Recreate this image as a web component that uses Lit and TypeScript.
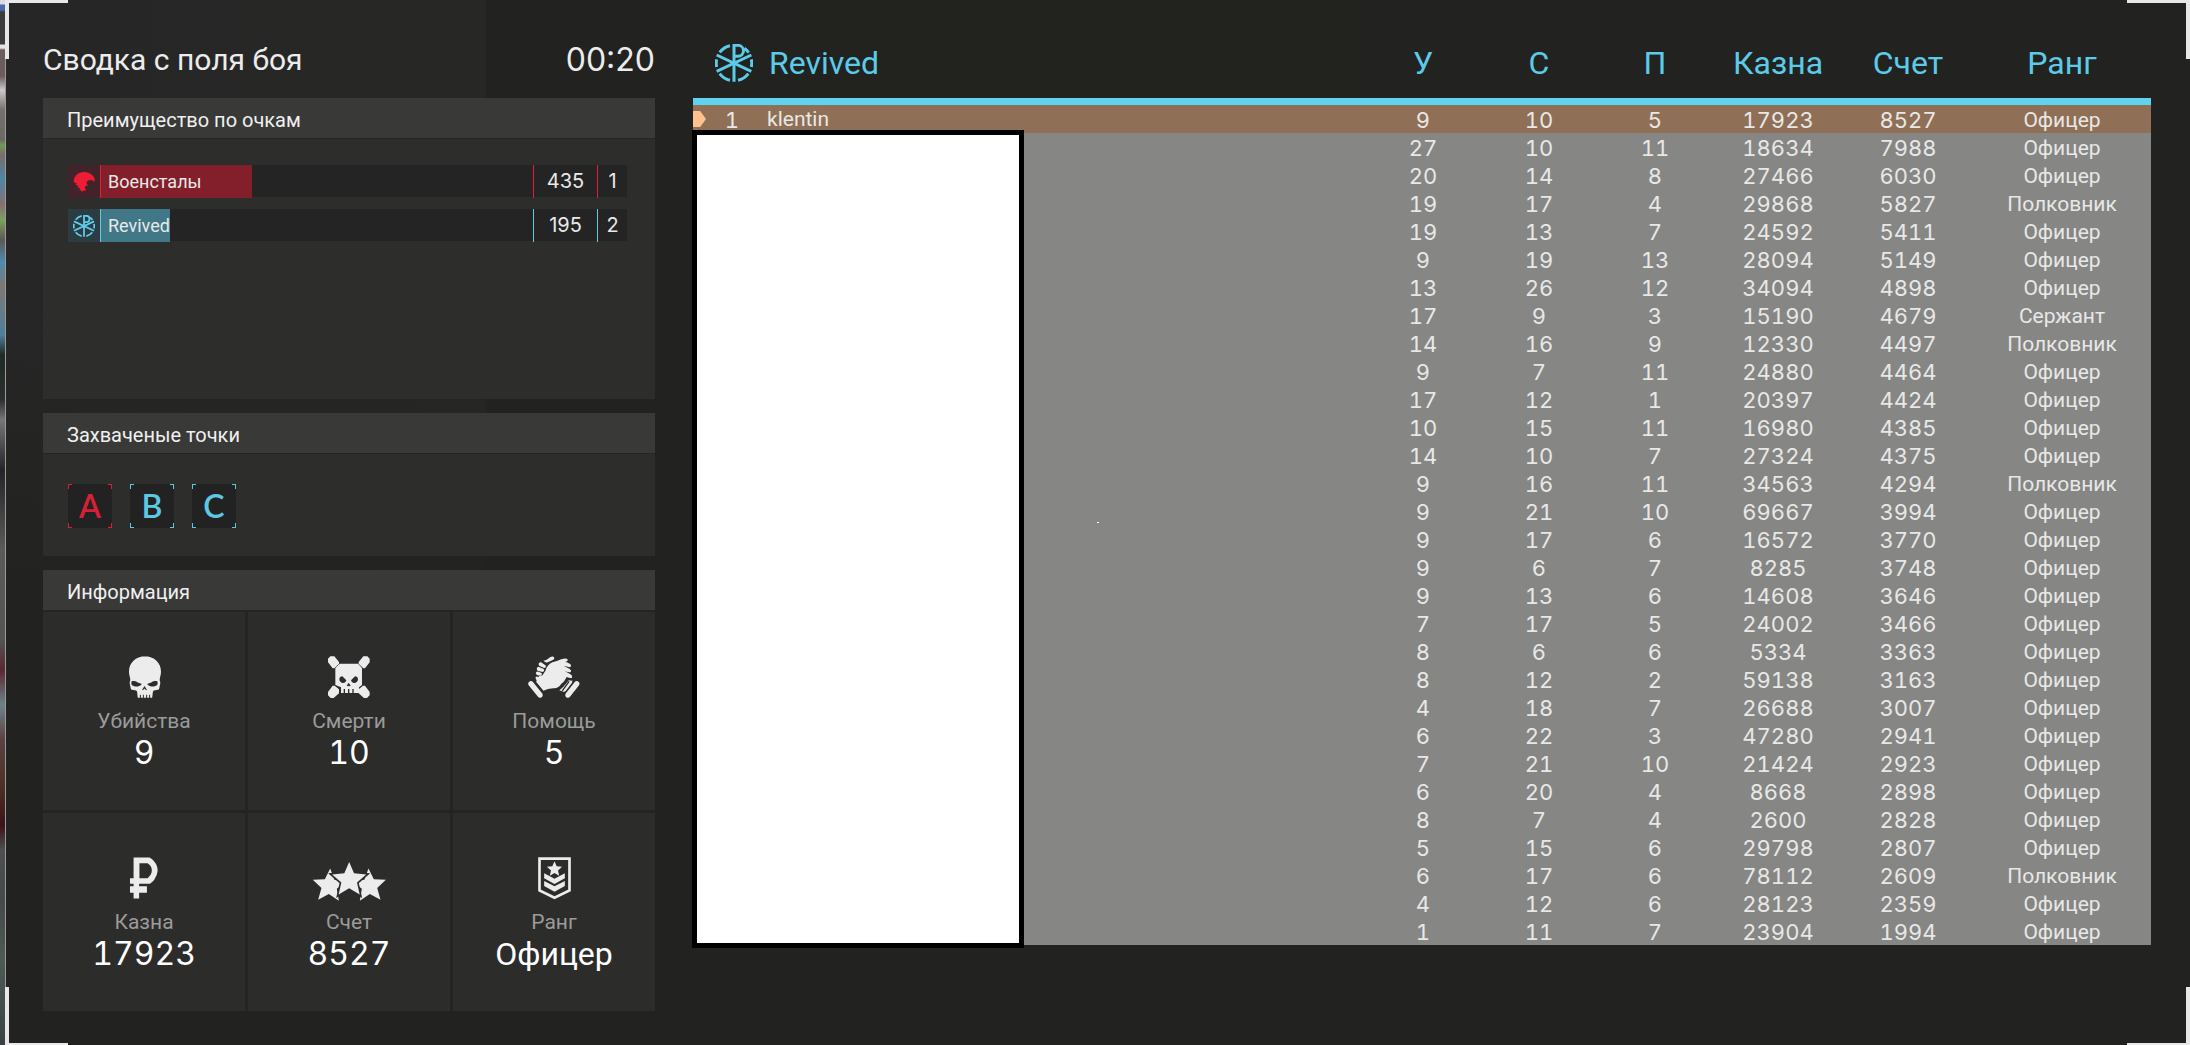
import { LitElement, html, css, svg, nothing } from "lit";
import { customElement, property } from "lit/decorators.js";
import { classMap } from "lit/directives/class-map.js";
import { styleMap } from "lit/directives/style-map.js";

type Row = [number, number, number, number, number, string];

const O = "Офицер";
const P = "Полковник";

const ROWS: Row[] = [
  [9, 10, 5, 17923, 8527, O],
  [27, 10, 11, 18634, 7988, O],
  [20, 14, 8, 27466, 6030, O],
  [19, 17, 4, 29868, 5827, P],
  [19, 13, 7, 24592, 5411, O],
  [9, 19, 13, 28094, 5149, O],
  [13, 26, 12, 34094, 4898, O],
  [17, 9, 3, 15190, 4679, "Сержант"],
  [14, 16, 9, 12330, 4497, P],
  [9, 7, 11, 24880, 4464, O],
  [17, 12, 1, 20397, 4424, O],
  [10, 15, 11, 16980, 4385, O],
  [14, 10, 7, 27324, 4375, O],
  [9, 16, 11, 34563, 4294, P],
  [9, 21, 10, 69667, 3994, O],
  [9, 17, 6, 16572, 3770, O],
  [9, 6, 7, 8285, 3748, O],
  [9, 13, 6, 14608, 3646, O],
  [7, 17, 5, 24002, 3466, O],
  [8, 6, 6, 5334, 3363, O],
  [8, 12, 2, 59138, 3163, O],
  [4, 18, 7, 26688, 3007, O],
  [6, 22, 3, 47280, 2941, O],
  [7, 21, 10, 21424, 2923, O],
  [6, 20, 4, 8668, 2898, O],
  [8, 7, 4, 2600, 2828, O],
  [5, 15, 6, 29798, 2807, O],
  [6, 17, 6, 78112, 2609, P],
  [4, 12, 6, 28123, 2359, O],
  [1, 11, 7, 23904, 1994, O],
];

const emblem = html`<svg class="emblem" viewBox="0 0 114 114" fill="none" stroke="currentColor" stroke-width="9" aria-hidden="true">
  ${svg`
  <path d="M57 113V4h12a15 15 0 0 1 0 33H57"/>
  <path d="M5 33L109 82M5 82L109 33"/>
  <path d="M14 25A53 53 0 0 1 45 5M88 13A53 53 0 0 1 101 26M14 89A53 53 0 0 0 45 109M100 89A53 53 0 0 1 69 109M5 46A53 53 0 0 0 5 69M109 46A53 53 0 0 1 109 69"/>`}
</svg>`;

const eagle = html`<svg class="eagle" viewBox="0 0 66 62" fill="currentColor" aria-hidden="true">
  <path d="M2 29C3 12 16 1 33 1c12 0 23 6 29 14 3 5 4 11 2 17-2-5-6-7-12-7-7 0-11 4-11 8 0 5 4 7 3 11-3-2-6-2-8 1-1 5 3 8 4 12-5-2-8 0-13 3-2-3-4-5-8-6l2-5-8-2 3-5-8-3 3-4C3 33 2 31 2 29Z"/>
</svg>`;

const star = (cx: number, cy: number, r: number, turn: number) => {
  const pts = Array.from({ length: 10 }, (_, i) => {
    const a = (turn + i * 36 - 90) * (Math.PI / 180);
    const k = i % 2 ? r * 0.46 : r;
    return `${(cx + k * Math.cos(a)).toFixed(1)},${(cy + k * Math.sin(a)).toFixed(1)}`;
  });
  return pts.join(" ");
};

const ICONS = {
  kills: html`<svg viewBox="53 33 100 126" width="33" height="42" aria-hidden="true">
    <path class="lit" d="M103 33c30 0 50 20 50 47 0 11-4 17-4 26 3 5 2 12 0 17-1 5-1 11-5 12-5 2-13 0-15 4-2 5-1 13-3 20h-6v-9h-3v9h-6v-9h-3v9h-7v-9h-3v9h-6v-9h-3v9h-6c-2-7-1-15-3-20-2-4-10-2-15-4-4-1-4-7-5-12-2-5-3-12 0-17 0-9-4-15-4-26 0-27 20-47 50-47Z"/>
    <path class="cut" d="M64 109c6-1 11-1 17 3l14 5c-6 7-15 9-23 7-5-1-9-4-9-8ZM142 109c-6-1-11-1-17 3l-14 5c6 7 15 9 23 7 5-1 9-4 9-8ZM103 123l8 13-6-2-2-3-2 3-6 2Z"/>
  </svg>`,
  deaths: html`<svg viewBox="657 33 126 126" width="42" height="42" aria-hidden="true">
    <path class="lit" d="M664 34h12l14 17v5l-14 14h-5l-14-18V41ZM775 34h-12l-14 17v5l14 14h5l14-18V41ZM671 122h6l13 11v12l-16 14h-9l-8-8v-10ZM768 122h-6l-13 11v12l16 14h9l8-8v-10Z"/>
    <path class="lit" d="M692 56h55l12 13v51l-9 7v17h-54v-17l-17-7V69Z"/>
    <path class="cut" d="M691 103c0-5 4-9 9-9l12 12c-1 5-5 8-10 8-6 0-11-5-11-11ZM747 103c0-5-4-9-9-9l-12 12c1 5 5 8 10 8 6 0 11-5 11-11ZM719 113l6 9-4 2-2-2-2 2-4-2ZM704 132h4v13h-4ZM717 132h4v13h-4ZM730 132h4v13h-4Z"/>
  </svg>`,
  assists: html`<svg viewBox="1253 33 158 126" width="52" height="42" aria-hidden="true">
    <path class="lit" d="M1260 108q5-1 8 3l29 36q3 7-3 11-6 3-10-1l-29-36q-5-8 5-13ZM1403 108q-5-1-8 3l-28 36q-3 7 3 11 6 3 10-1l28-36q5-8-5-13Z"/>
    <path class="lit" d="M1327 51q14-3 27-9 13-4 19-1 3 8-9 9 9 1 18 7 4 7-2 9l-19-4 19 10q6 4 3 9-5 2-19-3l18 10q6 3 5 10-4 3-17-2-6 15-15 20-11 17-26 14-16 0-29 8l-22-27q2-20 19-20l9-14q4-18 21-26Z"/>
    <path class="lit" d="M1300 47q9-2 15-7 7-7 14-6 7 4 2 9-9 5-18 8-6 3-13-4ZM1287 53q-4 3 0 9l15 7q7-1 5-8l-13-9q-4-2-7 1ZM1281 67q-4 4 1 10l15 4q7-2 4-9l-13-6q-4-2-7 1ZM1278 81q-3 5 2 9l10 2q8-3 4-8l-9-4q-4-2-7 1ZM1276 96q-1 5 3 9 9 0 9-7l-6-3q-4-1-6 1Z"/>
    <path class="lit" d="M1377 106q6 2 11 1-1 8-3 9l-17 22q-3 4-9 2l-11-4q10-5 29-30Z"/>
    <path class="gap" d="M1378 109l-21 29"/>
  </svg>`,
  cash: html`<svg viewBox="62 42 86 126" width="28" height="42" aria-hidden="true">
    <path class="lit" fill-rule="evenodd" d="M73 42h49q9 5 15 13 10 12 10 28-1 14-11 28-5 6-13 12H90v7h24v20H90v18H73v-18H62v-20h11v-7H62v-17h11ZM91 60v46h25q13-12 13-24 0-14-13-22Z"/>
  </svg>`,
  score: html`<svg viewBox="605 42 226 126" width="75" height="42" aria-hidden="true">
    <polygon class="lit" points="${star(657, 129, 53, 3)}"/>
    <polygon class="lit" points="${star(778, 129, 53, -3)}"/>
    <polygon class="lit ring" points="${star(717, 111, 54, 0)}"/>
  </svg>`,
  rank: html`<svg viewBox="1285 46 98 126" width="33" height="42" aria-hidden="true">
    <path class="line" d="M1289 51h90v95l-45 22-45-22Z"/>
    <polygon class="lit" points="${star(1334, 83, 24, 0)}"/>
    <path class="lit" d="M1303 95l31 16 31-16v15l-31 17-31-17ZM1303 118l31 16 31-16v15l-31 17-31-17Z"/>
  </svg>`,
};

@customElement("team-bar")
export class TeamBar extends LitElement {
  @property() name = "";
  @property() side: "red" | "blue" = "red";
  @property({ type: Number }) points = 0;
  @property({ type: Number }) place = 0;
  @property({ type: Number }) fill = 0;

  static styles = css`
    :host { display: block; }
    .bar {
      display: grid;
      grid-template-columns: 32px minmax(0, 1fr) 64px 30px;
      height: 32px;
      background: #242424;
      color: #e9e9e9;
      font-size: 18px;
      line-height: 33px;
    }
    .red { --edge: #e01f35; --fill: #831f2b; --cell: #43232a; --mark: #ee1c35; }
    .blue { --edge: #62c9e2; --fill: #417888; --cell: #2b3d43; --mark: #5fcfee; }
    .logo { display: grid; place-items: center; background: var(--cell); color: var(--mark); }
    .emblem, .eagle { width: 22px; height: 22px; }
    .track, .num { border-left: 1px solid var(--edge); }
    .track { display: grid; align-items: stretch; }
    .level { background: var(--fill); grid-area: 1 / 1; }
    .name { grid-area: 1 / 1; padding-left: 7px; }
    .num { text-align: center; font-family: Inter, "Liberation Sans", sans-serif; font-size: 20px; }
  `;

  render() {
    return html`
      <div class=${classMap({ bar: true, [this.side]: true })}>
        <span class="logo">${this.side === "red" ? eagle : emblem}</span>
        <span class="track">
          <span class="level" style=${styleMap({ width: `${this.fill}%` })}></span>
          <span class="name">${this.name}</span>
        </span>
        <span class="num">${this.points}</span>
        <span class="num">${this.place}</span>
      </div>
    `;
  }
}

@customElement("stat-tile")
export class StatTile extends LitElement {
  @property() icon: keyof typeof ICONS = "kills";
  @property() label = "";
  @property() value = "";

  static styles = css`
    :host {
      display: flex;
      flex-direction: column;
      align-items: center;
      justify-content: center;
      padding-top: 4px;
      background: #2c2c2b;
    }
    svg { display: block; overflow: visible; }
    .lit { fill: #ececec; }
    .cut { fill: #2c2c2b; }
    .gap { stroke: #2c2c2b; stroke-width: 4; }
    .ring { stroke: #2c2c2b; stroke-width: 10; paint-order: stroke; }
    .line { fill: none; stroke: #ececec; stroke-width: 8; }
    .label { margin-top: 9px; color: #9b9b9a; font-size: 21px; line-height: 28px; }
    .value { color: #fff; font-size: 32px; line-height: 36px; }
    .digits { font-family: Inter, "Liberation Sans", sans-serif; font-variant-numeric: tabular-nums; }
  `;

  render() {
    return html`
      ${ICONS[this.icon]}
      <span class="label">${this.label}</span>
      <span class=${classMap({ value: true, digits: /^\d+$/.test(this.value) })}>${this.value}</span>
    `;
  }
}

@customElement("score-table")
export class ScoreTable extends LitElement {
  static styles = css`
    :host { display: block; position: relative; }
    table { width: 100%; border-collapse: separate; border-spacing: 0; table-layout: fixed; }
    .c-pos { width: 74px; }
    .c-num { width: 116px; }
    .c-sum { width: 130px; }
    .c-rank { width: 178px; }
    th {
      height: 105px;
      padding: 27px 0 0;
      box-sizing: border-box;
      border-bottom: 7px solid #5fd3f0;
      color: #5bcbe8;
      font-size: 32px;
      font-weight: 400;
      line-height: 38px;
    }
    .team { display: flex; align-items: center; gap: 16px; padding-left: 22px; }
    .emblem { width: 38px; height: 38px; }
    tbody { background: #868685; }
    td {
      height: 28px;
      padding: 2px 0 0;
      box-sizing: border-box;
      color: #e8e8e6;
      font-size: 21px;
      line-height: 26px;
      text-align: center;
    }
    .digits, .pos { font-family: Inter, "Liberation Sans", sans-serif; font-size: 22px; font-variant-numeric: tabular-nums; }
    .me { background: #8f7057; }
    .me .pos { position: relative; padding-left: 4px; }
    .me .pos::before {
      content: "";
      position: absolute;
      left: 0;
      top: 6px;
      width: 13px;
      height: 16px;
      background: #ffc18f;
      clip-path: polygon(0 0, 55% 0, 100% 50%, 55% 100%, 0 100%);
    }
    .name { padding-top: 0; text-align: left; }
    .cover {
      position: absolute;
      left: -1px;
      top: 130px;
      bottom: -3px;
      width: 332px;
      box-sizing: border-box;
      border: 5px solid #000;
      background: #fff;
    }
    .speck { position: absolute; left: 404px; top: 522px; width: 2px; height: 1px; background: #fff; }
  `;

  render() {
    return html`
      <table>
        <colgroup>
          <col class="c-pos"><col>
          <col class="c-num"><col class="c-num"><col class="c-num">
          <col class="c-sum"><col class="c-sum"><col class="c-rank">
        </colgroup>
        <thead>
          <tr>
            <th colspan="2" scope="col"><span class="team">${emblem}<span>Revived</span></span></th>
            <th scope="col">У</th>
            <th scope="col">С</th>
            <th scope="col">П</th>
            <th scope="col">Казна</th>
            <th scope="col">Счет</th>
            <th scope="col">Ранг</th>
          </tr>
        </thead>
        <tbody>
          ${ROWS.map(
            (row, i) => html`
              <tr class=${classMap({ me: i === 0 })}>
                <td class="pos">${i === 0 ? 1 : nothing}</td>
                <td class="name">${i === 0 ? "klentin" : nothing}</td>
                ${row.map((v) => html`<td class=${classMap({ digits: typeof v === "number" })}>${v}</td>`)}
              </tr>
            `
          )}
        </tbody>
      </table>
      <div class="cover"></div>
      <div class="speck"></div>
    `;
  }
}

@customElement("app-root")
export class AppRoot extends LitElement {
  static styles = css`
    :host {
      display: block;
      font-family: Roboto, "Liberation Sans", sans-serif;
      color: #ececec;
    }
    .screen {
      position: relative;
      box-sizing: border-box;
      min-height: 100vh;
      overflow: hidden;
      display: grid;
      grid-template-columns: minmax(0, 612fr) minmax(0, 1458fr);
      align-items: start;
      gap: 38px;
      padding: 0 39px 35px 43px;
      background:
        linear-gradient(transparent 30%, #222220 60%),
        linear-gradient(90deg, #262626 0, #272726 485px, #222220 487px, #22221f 50%, #222221 100%);
    }
    .edge {
      position: absolute;
      inset: 0 auto 0 0;
      width: 5px;
      border-right: 1px solid #9a9a9a;
      background: linear-gradient(
        #d8dce0 0 4px, #4a6aa8 5px 10px, #3c3c3c 12px 44px, #e4e4e4 45px 48px, #6b5d5c 50px 76px,
        #c9c9c9 90px, #77706d 110px, #6b6a62 140px, #6f9a58 145px, #7a6c6a 155px, #4f86a5 180px,
        #85706f 205px, #7da05f 220px, #5c5856 240px, #4e8cad 262px, #7e7875 285px, #4f7f9a 335px,
        #1e2b24 355px, #2c302e 400px, #77757a 420px, #23242a 470px, #5c5b57 550px, #545454 640px,
        #5b2731 670px, #6d8388 705px, #5d4142 740px, #4b2f22 790px, #3d1218 825px, #4d4f52 850px,
        #45494a 900px, #4c5b55 960px, #3a4145 1045px
      );
    }
    .corner { position: absolute; width: 63px; height: 59px; box-sizing: border-box; border: 0 solid #e8e8e8; }
    .tl { left: 5px; top: 0; border-width: 3px 0 0 4px; }
    .bl { left: 5px; bottom: 0; border-width: 0 0 3px 4px; }
    .tr { right: 0; top: 0; border-width: 3px 4px 0 0; }
    .br { right: 0; bottom: 0; border-width: 0 4px 3px 0; }

    .side { display: flex; flex-direction: column; gap: 14px; }
    .top {
      display: flex;
      justify-content: space-between;
      align-items: center;
      height: 98px;
      margin-bottom: -14px;
      padding-top: 20px;
      box-sizing: border-box;
      font-size: 30px;
    }
    .top h1 { margin: 0; font: inherit; }
    .top time { font-family: Inter, "Liberation Sans", sans-serif; font-size: 32px; }
    .panel { background: #2d2d2c; }
    .panel h2 {
      margin: 0;
      padding-left: 24px;
      height: 40px;
      background: #393938;
      border-bottom: 1px solid #252524;
      color: #f0f0f0;
      font-size: 20px;
      font-weight: 400;
      line-height: 44px;
    }
    .bars { display: flex; flex-direction: column; gap: 12px; min-height: 260px; box-sizing: border-box; padding: 26px 28px 26px 25px; }
    .points { display: flex; gap: 18px; padding: 30px 25px 28px; }
    .point {
      display: grid;
      place-items: center;
      width: 44px;
      height: 44px;
      background:
        linear-gradient(currentColor, currentColor) 0 0 / 4px 1px,
        linear-gradient(currentColor, currentColor) 0 0 / 1px 5px,
        linear-gradient(currentColor, currentColor) 100% 0 / 4px 1px,
        linear-gradient(currentColor, currentColor) 100% 0 / 1px 5px,
        linear-gradient(currentColor, currentColor) 0 100% / 4px 1px,
        linear-gradient(currentColor, currentColor) 0 100% / 1px 5px,
        linear-gradient(currentColor, currentColor) 100% 100% / 4px 1px,
        linear-gradient(currentColor, currentColor) 100% 100% / 1px 5px,
        #222;
      background-repeat: no-repeat;
      font-family: Lato, "Liberation Sans", sans-serif;
      font-size: 32px;
      font-weight: 600;
      line-height: 44px;
    }
    .red { color: #d81f38; }
    .blue { color: #5ec8e2; }
    .info { background: #242423; }
    .tiles {
      display: grid;
      grid-template-columns: repeat(3, minmax(0, 1fr));
      grid-auto-rows: 198px;
      gap: 3px;
      padding-top: 1px;
    }
  `;

  render() {
    return html`
      <main class="screen">
        <div class="edge"></div>
        <section class="side">
          <header class="top"><h1>Сводка с поля боя</h1><time>00:20</time></header>
          <section class="panel">
            <h2>Преимущество по очкам</h2>
            <div class="bars">
              <team-bar name="Военсталы" side="red" points="435" place="1" fill="35"></team-bar>
              <team-bar name="Revived" side="blue" points="195" place="2" fill="16"></team-bar>
            </div>
          </section>
          <section class="panel">
            <h2>Захваченые точки</h2>
            <div class="points">
              <span class="point red">A</span>
              <span class="point blue">B</span>
              <span class="point blue">C</span>
            </div>
          </section>
          <section class="panel info">
            <h2>Информация</h2>
            <div class="tiles">
              <stat-tile icon="kills" label="Убийства" value="9"></stat-tile>
              <stat-tile icon="deaths" label="Смерти" value="10"></stat-tile>
              <stat-tile icon="assists" label="Помощь" value="5"></stat-tile>
              <stat-tile icon="cash" label="Казна" value="17923"></stat-tile>
              <stat-tile icon="score" label="Счет" value="8527"></stat-tile>
              <stat-tile icon="rank" label="Ранг" value="Офицер"></stat-tile>
            </div>
          </section>
        </section>
        <score-table></score-table>
        <div class="corner tl"></div>
        <div class="corner tr"></div>
        <div class="corner bl"></div>
        <div class="corner br"></div>
      </main>
    `;
  }
}
